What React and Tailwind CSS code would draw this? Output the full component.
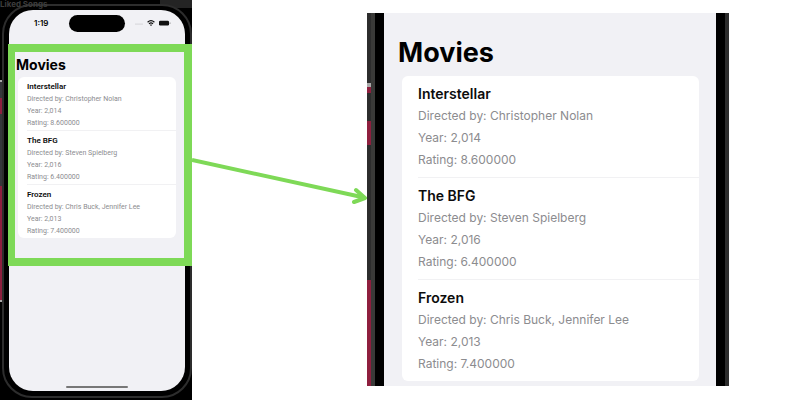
import React from 'react';

const movies = [
  { name: 'Interstellar', director: 'Christopher Nolan', year: '2,014', rating: '8.600000' },
  { name: 'The BFG', director: 'Steven Spielberg', year: '2,016', rating: '6.400000' },
  { name: 'Frozen', director: 'Chris Buck, Jennifer Lee', year: '2,013', rating: '7.400000' },
];

function MovieList({ small }) {
  return (
    <ul
      className={
        small
          ? "mx-[9px] rounded-md bg-white pl-[9px] font-['Roboto',sans-serif] text-[7px] leading-[12px]"
          : 'mr-[17px] ml-[18px] rounded-md bg-white pl-4 text-[12px] leading-[22px]'
      }
    >
      {movies.map((movie) => (
        <li
          key={movie.name}
          className={`border-b border-[#f1f1f3] text-[#8c8c8f] last:border-b-0 ${small ? 'pt-1 pb-px' : 'pt-[7px] pb-[6px]'}`}
        >
          <h2 className={`font-semibold text-[#0c0c0c] ${small ? 'text-[8px] leading-[12px]' : 'text-[14px] leading-[22px]'}`}>
            {movie.name}
          </h2>
          <p>Directed by: {movie.director}</p>
          <p>Year: {movie.year}</p>
          <p>Rating: {movie.rating}</p>
        </li>
      ))}
    </ul>
  );
}

function StatusBar() {
  return (
    <div className="flex h-[26px] items-center pl-[25px]">
      <span className="w-[35px] text-[8px] font-semibold">1:19</span>
      <div className="h-[17px] w-14 rounded-full bg-black" />
      <div className="ml-[10px] flex items-center gap-1">
        <svg className="h-2 w-2" viewBox="0 0 8 8" fill="#b5b5b8">
          <circle cx="1" cy="5" r="0.6" />
          <circle cx="3" cy="5" r="0.6" />
          <circle cx="5" cy="5" r="0.6" />
          <circle cx="7" cy="5" r="0.6" />
        </svg>
        <svg className="h-2 w-2" viewBox="0 0 8 8" fill="none" stroke="#111" strokeWidth="1.2">
          <path d="M0.6 3.2 Q4 0 7.4 3.2" />
          <path d="M2 4.9 Q4 3 6 4.9" />
          <path d="M3.2 5.8 L4 6.8 L4.8 5.8 Z" fill="#111" strokeWidth="0.4" />
        </svg>
        <svg className="h-2 w-3" viewBox="0 0 12 8">
          <rect x="0" y="1.8" width="10" height="4.6" rx="1.2" fill="#111" />
          <rect x="10.6" y="3.4" width="0.8" height="1.6" fill="#888" />
        </svg>
      </div>
    </div>
  );
}

function Phone() {
  return (
    <div className="relative flex w-48 shrink-0 overflow-hidden bg-black">
      {/* desktop window peeking out behind the phone */}
      <div className="absolute top-0 right-0 h-2 w-8 bg-[#242424]" />
      <div className="flex w-[2px] flex-col pt-20">
        <div className="h-[2px] bg-[#aaa]" />
        <div className="h-4 bg-[#35363b]" />
        <div className="h-4 bg-[#8e1f3e]" />
        <div className="h-[72px] bg-[#35363b]" />
        <div className="h-[114px] bg-[#8e1f3e]" />
        <div className="h-[2px] bg-[#aaa]" />
      </div>
      <div className="relative mt-1 mb-[2px] flex flex-1 rounded-[30px] border-2 border-[#2d2d2d] bg-black p-[5px] pt-1">
        <div className="flex flex-1 flex-col rounded-3xl bg-[#f1f1f5]">
          <StatusBar />
          <h1 className="mt-[17px] pl-[7px] text-[14px] leading-6 font-bold">Movies</h1>
          <MovieList small />
          <div className="mx-auto mt-auto mb-[3px] h-[2px] w-[62px] rounded-full bg-[#777]" />
        </div>
      </div>
      <span className="absolute top-0 left-0 text-[8px] leading-2 font-bold text-[#3d3d3d]">Liked Songs</span>
      <div className="absolute top-11 right-0 left-2 h-[222px] border-8 border-l-[7px] border-[#7ed957]" />
    </div>
  );
}

function Arrow() {
  return (
    <svg className="min-w-0 flex-1" viewBox="0 0 175 400" fill="none" stroke="#7ed957" strokeWidth="4">
      <path d="M0 160 L172 197.5" />
      <path d="M164 190 L173 198 L162 202" strokeLinecap="round" strokeLinejoin="round" />
    </svg>
  );
}

function Closeup() {
  return (
    <div className="mt-[13px] mr-[71px] mb-[14px] flex w-[362px] shrink-0">
      <div className="flex w-1 flex-col bg-[#2d2d2d] pt-[70px]">
        <div className="h-1 bg-[#aaa]" />
        <div className="h-[6px] bg-[#8e1f3e]" />
        <div className="h-7" />
        <div className="h-6 bg-[#8e1f3e]" />
        <div className="h-[135px]" />
        <div className="flex-1 bg-[#8e1f3e]" />
      </div>
      <div className="w-1 bg-[#3a3a38]" />
      <div className="w-[9px] bg-black" />
      <div className="flex-1 bg-[#f1f1f5]">
        <h1 className="mt-[22px] mb-[5px] pl-[14px] text-[27px] leading-9 font-bold">Movies</h1>
        <MovieList />
      </div>
      <div className="w-[9px] bg-black" />
      <div className="w-1 bg-[#2d2d2d]" />
    </div>
  );
}

export default function App() {
  return (
    <main className="flex min-h-screen bg-white font-['Inter',sans-serif] text-black">
      <Phone />
      <Arrow />
      <Closeup />
    </main>
  );
}
